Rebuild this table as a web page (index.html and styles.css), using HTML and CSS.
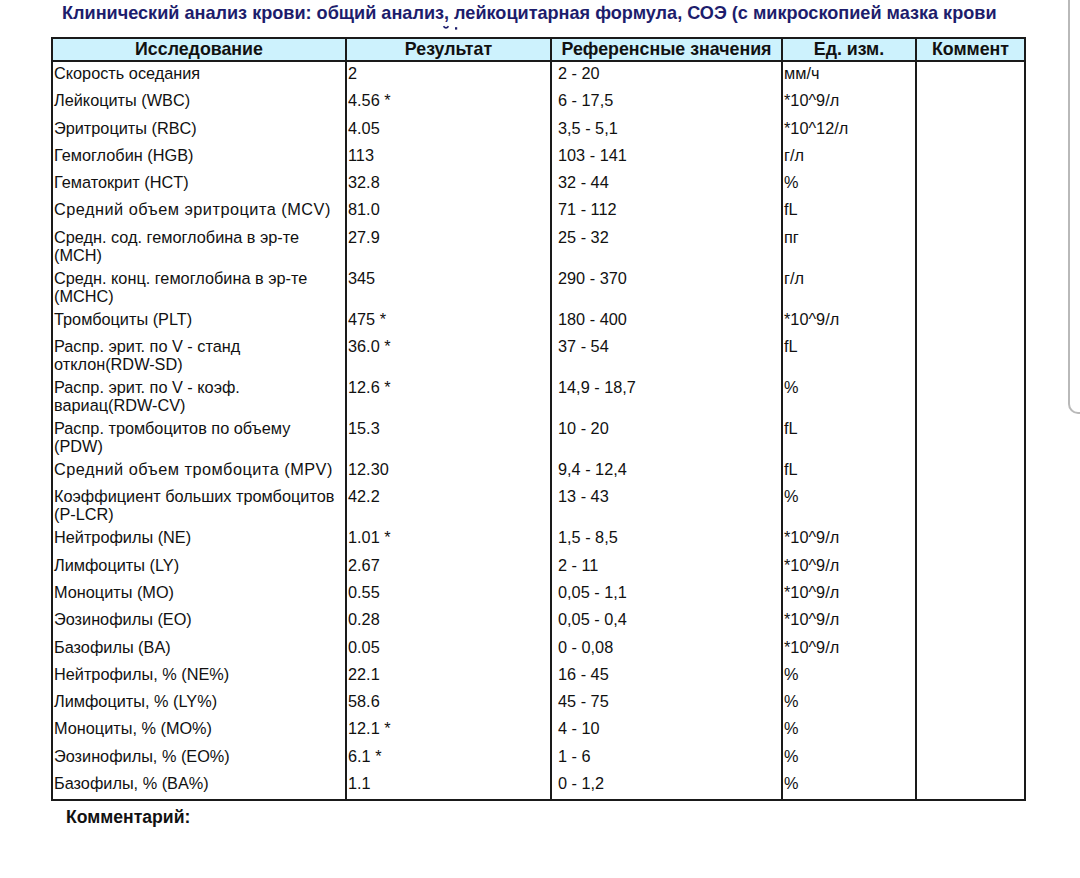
FILE: index.html
```html
<!DOCTYPE html>
<html lang="ru">
<head>
<meta charset="utf-8">
<title>Клинический анализ крови</title>
<link rel="stylesheet" href="styles.css">
</head>
<body>
<div class="page">
  <div class="edge"></div>
  <h1 class="title">Клинический анализ крови: общий анализ, лейкоцитарная формула, СОЭ (с микроскопией мазка крови</h1>
  <svg class="marks" width="24" height="6" viewBox="0 0 24 6" aria-hidden="true">
    <path d="M1.5 1.2 Q4 4.6 6.5 1.2" fill="none" stroke="#1d1d6c" stroke-width="1.6"/>
    <rect x="13" y="2.2" width="2.2" height="2.4" fill="#1d1d6c"/>
  </svg>
  <div class="table">
    <div class="row head">
      <div class="c c1">Исследование</div>
      <div class="c c2">Результат</div>
      <div class="c c3">Референсные значения</div>
      <div class="c c4">Ед. изм.</div>
      <div class="c c5">Коммент</div>
    </div>
    <div class="row"><div class="c c1">Скорость оседания</div><div class="c c2">2</div><div class="c c3">2 - 20</div><div class="c c4">мм/ч</div><div class="c c5"></div></div>
    <div class="row"><div class="c c1">Лейкоциты (WBC)</div><div class="c c2">4.56 *</div><div class="c c3">6 - 17,5</div><div class="c c4">*10^9/л</div><div class="c c5"></div></div>
    <div class="row"><div class="c c1">Эритроциты (RBC)</div><div class="c c2">4.05</div><div class="c c3">3,5 - 5,1</div><div class="c c4">*10^12/л</div><div class="c c5"></div></div>
    <div class="row"><div class="c c1">Гемоглобин (HGB)</div><div class="c c2">113</div><div class="c c3">103 - 141</div><div class="c c4">г/л</div><div class="c c5"></div></div>
    <div class="row"><div class="c c1">Гематокрит (HCT)</div><div class="c c2">32.8</div><div class="c c3">32 - 44</div><div class="c c4">%</div><div class="c c5"></div></div>
    <div class="row"><div class="c c1 wide">Средний объем эритроцита (MCV)</div><div class="c c2">81.0</div><div class="c c3">71 - 112</div><div class="c c4">fL</div><div class="c c5"></div></div>
    <div class="row"><div class="c c1">Средн. сод. гемоглобина в эр-те<br>(MCH)</div><div class="c c2">27.9</div><div class="c c3">25 - 32</div><div class="c c4">пг</div><div class="c c5"></div></div>
    <div class="row"><div class="c c1">Средн. конц. гемоглобина в эр-те<br>(MCHC)</div><div class="c c2">345</div><div class="c c3">290 - 370</div><div class="c c4">г/л</div><div class="c c5"></div></div>
    <div class="row"><div class="c c1">Тромбоциты (PLT)</div><div class="c c2">475 *</div><div class="c c3">180 - 400</div><div class="c c4">*10^9/л</div><div class="c c5"></div></div>
    <div class="row"><div class="c c1">Распр. эрит. по V - станд<br>отклон(RDW-SD)</div><div class="c c2">36.0 *</div><div class="c c3">37 - 54</div><div class="c c4">fL</div><div class="c c5"></div></div>
    <div class="row"><div class="c c1">Распр. эрит. по V - коэф.<br>вариац(RDW-CV)</div><div class="c c2">12.6 *</div><div class="c c3">14,9 - 18,7</div><div class="c c4">%</div><div class="c c5"></div></div>
    <div class="row"><div class="c c1">Распр. тромбоцитов по объему<br>(PDW)</div><div class="c c2">15.3</div><div class="c c3">10 - 20</div><div class="c c4">fL</div><div class="c c5"></div></div>
    <div class="row"><div class="c c1 wide">Средний объем тромбоцита (MPV)</div><div class="c c2">12.30</div><div class="c c3">9,4 - 12,4</div><div class="c c4">fL</div><div class="c c5"></div></div>
    <div class="row"><div class="c c1">Коэффициент больших тромбоцитов<br>(P-LCR)</div><div class="c c2">42.2</div><div class="c c3">13 - 43</div><div class="c c4">%</div><div class="c c5"></div></div>
    <div class="row"><div class="c c1">Нейтрофилы (NE)</div><div class="c c2">1.01 *</div><div class="c c3">1,5 - 8,5</div><div class="c c4">*10^9/л</div><div class="c c5"></div></div>
    <div class="row"><div class="c c1">Лимфоциты (LY)</div><div class="c c2">2.67</div><div class="c c3">2 - 11</div><div class="c c4">*10^9/л</div><div class="c c5"></div></div>
    <div class="row"><div class="c c1">Моноциты (MO)</div><div class="c c2">0.55</div><div class="c c3">0,05 - 1,1</div><div class="c c4">*10^9/л</div><div class="c c5"></div></div>
    <div class="row"><div class="c c1">Эозинофилы (EO)</div><div class="c c2">0.28</div><div class="c c3">0,05 - 0,4</div><div class="c c4">*10^9/л</div><div class="c c5"></div></div>
    <div class="row"><div class="c c1">Базофилы (BA)</div><div class="c c2">0.05</div><div class="c c3">0 - 0,08</div><div class="c c4">*10^9/л</div><div class="c c5"></div></div>
    <div class="row"><div class="c c1">Нейтрофилы, % (NE%)</div><div class="c c2">22.1</div><div class="c c3">16 - 45</div><div class="c c4">%</div><div class="c c5"></div></div>
    <div class="row"><div class="c c1">Лимфоциты, % (LY%)</div><div class="c c2">58.6</div><div class="c c3">45 - 75</div><div class="c c4">%</div><div class="c c5"></div></div>
    <div class="row"><div class="c c1">Моноциты, % (MO%)</div><div class="c c2">12.1 *</div><div class="c c3">4 - 10</div><div class="c c4">%</div><div class="c c5"></div></div>
    <div class="row"><div class="c c1">Эозинофилы, % (EO%)</div><div class="c c2">6.1 *</div><div class="c c3">1 - 6</div><div class="c c4">%</div><div class="c c5"></div></div>
    <div class="row last"><div class="c c1">Базофилы, % (BA%)</div><div class="c c2">1.1</div><div class="c c3">0 - 1,2</div><div class="c c4">%</div><div class="c c5"></div></div>
  </div>
  <div class="comment">Комментарий:</div>
</div>
</body>
</html>
```
FILE: styles.css
```css
html, body {
  margin: 0;
  padding: 0;
  background: #ffffff;
}
.page {
  position: relative;
  width: 1080px;
  height: 878px;
  overflow: hidden;
  font-family: "Liberation Sans", Arial, sans-serif;
  color: #111;
}
.edge {
  position: absolute;
  left: 1068px;
  top: -20px;
  width: 30px;
  height: 432px;
  border-left: 2px solid #b9b9b9;
  border-bottom: 2px solid #b9b9b9;
  border-bottom-left-radius: 10px;
}
.title {
  margin: 0;
  padding: 3px 0 0 62px;
  font-size: 18.1px;
  line-height: 20px;
  font-weight: bold;
  color: #1d1d6c;
  white-space: nowrap;
}
.marks {
  display: block;
  margin: 2px 0 6px 442px;
}
.table {
  margin-left: 51px;
  width: 975px;
  border-bottom: 2px solid #1a1a1a;
}
.row {
  display: grid;
  grid-template-columns: 294px 205px 231px 134px 111px;
  min-height: 27.3px;
  font-size: 16.3px;
  line-height: 18px;
}
.c {
  border-left: 2px solid #1a1a1a;
  padding: 2px 1px 3px 1px;
  white-space: nowrap;
}
.c5 {
  border-right: 2px solid #1a1a1a;
}
.row .c3 {
  padding-left: 6px;
}
.wide {
  letter-spacing: 0.5px;
}
.row.head {
  min-height: 0;
  background: #cdf2fd;
  border-top: 2px solid #1a1a1a;
  border-bottom: 2px solid #1a1a1a;
  font-weight: bold;
  font-size: 17.8px;
  line-height: 21px;
}
.row.head .c {
  text-align: center;
  padding: 0;
}
.comment {
  margin: 6px 0 0 66px;
  font-size: 17.6px;
  line-height: 20px;
  font-weight: bold;
  color: #111;
}
```
